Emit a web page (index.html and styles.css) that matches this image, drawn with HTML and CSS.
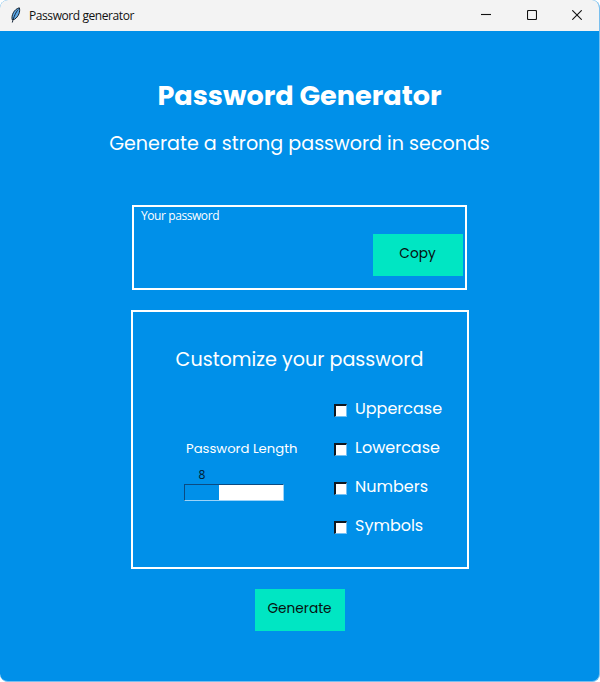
FILE: index.html
```html
<!DOCTYPE html>
<html lang="en">
<head>
<meta charset="utf-8">
<title>Password generator</title>
<link rel="stylesheet" href="styles.css">
</head>
<body>
<div class="window">
  <header class="titlebar">
    <svg class="feather" width="12" height="16" viewBox="0 0 12 16">
      <path d="M2.200 12.800C1.200 8.500 3.800 2.300 9.300.8c1.200 3.500-.6 8.900-4.800 11.500z" fill="#5fa9e6" stroke="#14202c" stroke-width="1"/>
      <path d="M8.200 2.500C5.800 5.500 4 9 2.300 15.500" fill="none" stroke="#142438" stroke-width="1"/>
    </svg>
    <span class="caption">Password generator</span>
    <div class="controls">
      <svg width="10" height="10" viewBox="0 0 10 10"><path d="M0 4.500h10"/></svg>
      <svg width="10" height="10" viewBox="0 0 10 10"><rect x=".5" y=".5" width="9" height="9" rx="1"/></svg>
      <svg width="10" height="10" viewBox="0 0 10 10"><path d="M.3.300l9.400 9.400M9.700.3L.3 9.700"/></svg>
    </div>
  </header>
  <main class="content">
    <h1>Password Generator</h1>
    <p class="subtitle">Generate a strong password in seconds</p>
    <section class="result">
      <span class="result-label">Your password</span>
      <button class="button copy">Copy</button>
    </section>
    <section class="customize">
      <h2>Customize your password</h2>
      <div class="settings">
        <div class="length">
          <div class="length-label">Password Length</div>
          <div class="length-value">8</div>
          <div class="slider"><div class="thumb"></div></div>
        </div>
        <div class="options">
          <label><i class="box"></i><span>Uppercase</span></label>
          <label><i class="box"></i><span>Lowercase</span></label>
          <label><i class="box"></i><span>Numbers</span></label>
          <label><i class="box"></i><span>Symbols</span></label>
        </div>
      </div>
    </section>
    <button class="button generate">Generate</button>
  </main>
</div>
</body>
</html>
```
FILE: styles.css
```css
* { box-sizing: border-box; }
body { margin: 0; background: #fff; font-family: Poppins, Inter, sans-serif; }
.window { width: 600px; height: 682px; border: solid #79bfee; border-width: 0 1px 1px 0; border-radius: 8px; overflow: hidden; background: #0090e9; }
.titlebar { height: 31px; background: #f3f3f3; display: flex; align-items: center; padding: 0 17px 1px 10px; }
.caption { margin: 1px 0 0 7px; font: 12px/16px "Open Sans", sans-serif; letter-spacing: -.42px; color: #111; white-space: nowrap; }
.controls { margin-left: auto; display: flex; gap: 35.5px; }
.controls svg { fill: none; stroke: #111; stroke-width: 1.1; }
.content { display: flex; flex-direction: column; align-items: center; color: #fff; }
h1, h2, p { margin: 0; white-space: nowrap; font-weight: 400; }
h1 { margin-top: 45px; font-size: 27.1px; line-height: 40px; font-weight: 700; }
.subtitle { margin-top: 13px; font-size: 19.1px; line-height: 30px; }
.result { width: 335px; height: 85px; margin: 46px 1px 0 0; border: 2px solid #fff; display: flex; flex-direction: column; padding: 1px 2px 0 7px; }
.result-label { padding-left: .5px; font: 12px/16px "Open Sans", sans-serif; letter-spacing: -.42px; }
.button { width: 90px; height: 42px; border: 0; padding: 0 0 3px; background: #00e6c3; color: #07110f; font: inherit; font-size: 13.7px; }
.copy { align-self: flex-end; margin-top: 10px; }
.customize { width: 338px; height: 259px; margin-top: 20px; border: 2px solid #fff; padding-top: 33px; }
h2 { text-align: center; font-size: 19.15px; line-height: 30px; }
.settings { display: flex; padding-left: 51px; margin-top: 14px; }
.length { width: 150px; padding-top: 50px; }
.length-label { padding-left: 2.500px; font-size: 13.2px; line-height: 20px; white-space: nowrap; }
.length-value { margin-top: 9px; padding-left: 15px; color: #001a30; font: 12px/14px "Open Sans", sans-serif; }
.slider { width: 100px; height: 17px; margin-top: 2px; background: #fff; border: 1px solid; border-color: #0b4b82 #9bd4fa #9bd4fa #0b4b82; }
.thumb { width: 34px; height: 15px; background: #0090e9; }
.options { display: flex; flex-direction: column; padding-top: 8px; }
.options label { height: 39px; display: flex; align-items: flex-start; gap: 8.5px; font-size: 16px; line-height: 24px; white-space: nowrap; }
.box { width: 13px; height: 13px; margin-top: 7px; background: #fff; border: solid; border-width: 2px 1px 1px 2px; border-color: #101820 #74c1f5 #74c1f5 #101820; }
.generate { margin-top: 20px; }
```
